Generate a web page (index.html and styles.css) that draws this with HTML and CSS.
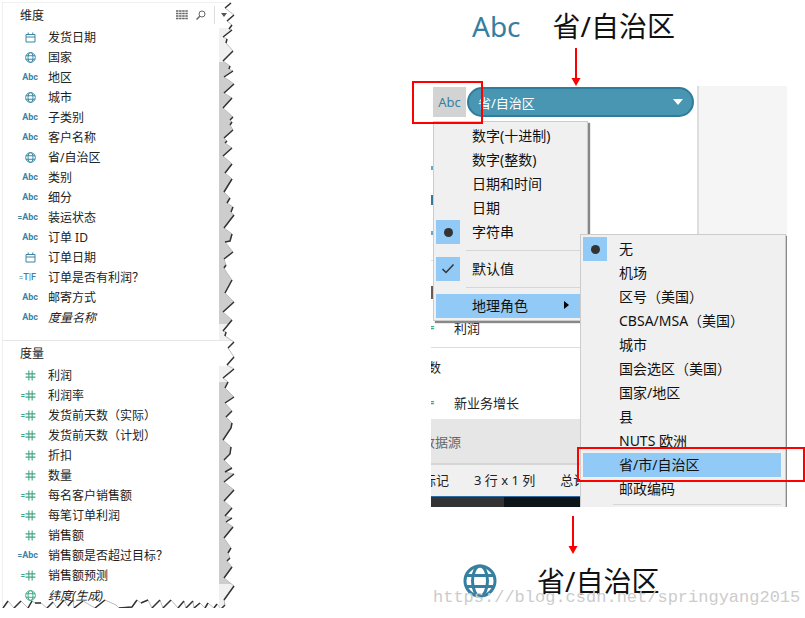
FILE: index.html
```
<!DOCTYPE html>
<html lang="zh-CN">

<head>
    <meta charset="UTF-8">
    <meta name="viewport" content="width=device-width, initial-scale=1.0">
    <title>地理角色</title>
    <link rel="stylesheet" href="styles.css">
</head>

<body>
    <!-- Shared icons -->
    <svg class="defs" aria-hidden="true">
        <symbol id="date" viewBox="0 0 11 11">
            <path d="M1 2.5h9v7.5H1zM1 5h9M3.2 .5v2M7.8 .5v2" fill="none" stroke="currentColor" />
        </symbol>
        <symbol id="globe" viewBox="0 0 34 34">
            <g fill="none" stroke="currentColor" stroke-width="3">
                <circle cx="17" cy="17" r="15" />
                <ellipse cx="17" cy="17" rx="7.500" ry="15" />
                <path d="M3 11.500h28M3 22.500h28" />
            </g>
        </symbol>
        <symbol id="number" viewBox="0 0 10 10">
            <path d="M3.500 .5v9M6.500 .5v9M.5 3.500h9M.5 6.500h9" fill="none" stroke="currentColor" />
        </symbol>
    </svg>

    <div id="app">
        <!-- Data pane -->
        <aside class="data-pane">
            <section class="group dimensions">
                <header class="group-head">
                    <h2>维度</h2>
                    <button class="tool" aria-label="视图">
                        <svg width="12" height="10" viewBox="0 0 12 10"><path d="M0 1h12M0 3.500h12M0 6h12M0 8.500h12" stroke="#666" stroke-width="1.300" stroke-dasharray="2.500 .6" /></svg>
                    </button>
                    <button class="tool" aria-label="搜索">
                        <svg width="10" height="10" viewBox="0 0 10 10" fill="none" stroke="#666"><circle cx="6" cy="4" r="3" /><path d="M3.800 6.200L.5 9.500" stroke-width="1.500" /></svg>
                    </button>
                    <button class="tool more" aria-label="更多">
                        <svg width="6" height="4" viewBox="0 0 6 4"><path d="M0 0h6L3 4z" fill="#555" /></svg>
                    </button>
                </header>
                <div class="group-body">
                    <ul class="fields">
                        <li><span class="type"><svg><use href="#date" /></svg></span>发货日期</li>
                        <li><span class="type"><svg><use href="#globe" /></svg></span>国家</li>
                        <li><span class="type">Abc</span>地区</li>
                        <li><span class="type"><svg><use href="#globe" /></svg></span>城市</li>
                        <li><span class="type">Abc</span>子类别</li>
                        <li><span class="type">Abc</span>客户名称</li>
                        <li><span class="type"><svg><use href="#globe" /></svg></span>省/自治区</li>
                        <li><span class="type">Abc</span>类别</li>
                        <li><span class="type">Abc</span>细分</li>
                        <li><span class="type"><i>=</i>Abc</span>装运状态</li>
                        <li><span class="type">Abc</span>订单 ID</li>
                        <li><span class="type"><svg><use href="#date" /></svg></span>订单日期</li>
                        <li><span class="type bool"><i>=</i>T|F</span>订单是否有利润？</li>
                        <li><span class="type">Abc</span>邮寄方式</li>
                        <li class="generated"><span class="type">Abc</span>度量名称</li>
                    </ul>
                    <div class="scrollbar"><div class="thumb"></div></div>
                </div>
            </section>

            <section class="group measures">
                <header class="group-head">
                    <h2>度量</h2>
                </header>
                <div class="group-body">
                    <ul class="fields">
                        <li><span class="type"><svg><use href="#number" /></svg></span>利润</li>
                        <li><span class="type"><i>=</i><svg><use href="#number" /></svg></span>利润率</li>
                        <li><span class="type"><i>=</i><svg><use href="#number" /></svg></span>发货前天数（实际）</li>
                        <li><span class="type"><i>=</i><svg><use href="#number" /></svg></span>发货前天数（计划）</li>
                        <li><span class="type"><svg><use href="#number" /></svg></span>折扣</li>
                        <li><span class="type"><svg><use href="#number" /></svg></span>数量</li>
                        <li><span class="type"><i>=</i><svg><use href="#number" /></svg></span>每名客户销售额</li>
                        <li><span class="type"><i>=</i><svg><use href="#number" /></svg></span>每笔订单利润</li>
                        <li><span class="type"><svg><use href="#number" /></svg></span>销售额</li>
                        <li><span class="type text"><i>=</i>Abc</span>销售额是否超过目标？</li>
                        <li><span class="type"><i>=</i><svg><use href="#number" /></svg></span>销售额预测</li>
                        <li class="generated"><span class="type"><svg><use href="#globe" /></svg></span>纬度(生成)</li>
                    </ul>
                    <div class="scrollbar"><div class="thumb"></div></div>
                </div>
            </section>

            <!-- Torn paper edge -->
            <svg class="torn" width="240" height="618" viewBox="0 0 240 618" fill="none" aria-hidden="true">
                <path fill="#fff" d="M231 3L225 8L234 15L227 21L232 25L229 29L232 30L223 37L227 39L226 43L233 51L223 61L230 66L229 69L233 71L224 77L234 84L224 93L232 98L223 108L233 117L230 120L232 122L230 125L233 130L224 138L227 141L225 143L232 148L223 156L232 164L225 173L232 179L224 192L230 198L227 203L233 207L231 212L234 215L224 228L232 234L230 241L225 242L233 252L224 259L226 265L224 268L227 273L232 280L225 293L234 302L223 312L232 320L223 331L226 332L225 336L234 342L228 348L234 357L227 365L234 369L223 378L228 382L225 388L234 397L225 403L232 411L226 417L232 423L231 428L223 440L231 447L230 454L224 460L232 468L225 472L234 474L224 482L234 490L224 501L232 508L225 516L232 518L226 522L233 527L224 538L231 548L228 553L230 558L227 561L232 567L224 578L234 586L224 600L225 605L221 609L217 604L214 608L208 603L205 608L200 603L194 608L193 601L186 608L184 601L178 608L171 600L163 608L160 600L152 608L148 600L141 603L137 600L132 607L119 608L116 605L105 600L95 608L83 601L74 608L73 600L68 606L64 600L57 608L53 602L47 608L41 603L35 603L32 601L28 608L21 601L14 608L8 601L3 608L0 608V618H240V0H231z" />
                <path stroke="#bbb" d="M231 3L225 8L234 15L227 21L232 25L229 29L232 30L223 37L227 39L226 43L233 51L223 61L230 66L229 69L233 71L224 77L234 84L224 93L232 98L223 108L233 117L230 120L232 122L230 125L233 130L224 138L227 141L225 143L232 148L223 156L232 164L225 173L232 179L224 192L230 198L227 203L233 207L231 212L234 215L224 228L232 234L230 241L225 242L233 252L224 259L226 265L224 268L227 273L232 280L225 293L234 302L223 312L232 320L223 331L226 332L225 336L234 342L228 348L234 357L227 365L234 369L223 378L228 382L225 388L234 397L225 403L232 411L226 417L232 423L231 428L223 440L231 447L230 454L224 460L232 468L225 472L234 474L224 482L234 490L224 501L232 508L225 516L232 518L226 522L233 527L224 538L231 548L228 553L230 558L227 561L232 567L224 578L234 586L224 600L225 605L221 609L217 604L214 608L208 603L205 608L200 603L194 608L193 601L186 608L184 601L178 608L171 600L163 608L160 600L152 608L148 600L141 603L137 600L132 607L119 608L116 605L105 600L95 608L83 601L74 608L73 600L68 606L64 600L57 608L53 602L47 608L41 603L35 603L32 601L28 608L21 601L14 608L8 601L3 608" />
                <path stroke="#333" stroke-width="1.500" d="M231 3L225 8M234 15L227 21M232 25L229 29M232 30L223 37M227 39L226 43M233 51L223 61M230 66L229 69M233 71L224 77M234 84L224 93M232 98L223 108M233 117L230 120M232 122L230 125M233 130L224 138M227 141L225 143M232 148L223 156M232 164L225 173M232 179L224 192M230 198L227 203M233 207L231 212M234 215L224 228M232 234L230 241L225 242M233 252L224 259M226 265L224 268M232 280L225 293M234 302L223 312M232 320L223 331M226 332L225 336M234 342L228 348M234 357L227 365M234 369L223 378M228 382L225 388M234 397L225 403M232 411L226 417M232 423L231 428L223 440M231 447L230 454L224 460M232 468L225 472M234 474L224 482M234 490L224 501M232 508L225 516M232 518L226 522M233 527L224 538M231 548L228 553M230 558L227 561M232 567L224 578M234 586L224 600M225 605L221 609M217 604L214 608M208 603L205 608M200 603L194 608M193 601L186 608M184 601L178 608M171 600L163 608M160 600L152 608M148 600L141 603M137 600L132 607L119 608M105 600L95 608M83 601L74 608M73 600L68 606M64 600L57 608M53 602L47 608M41 603L35 603M32 601L28 608M21 601L14 608M8 601L3 608" />
            </svg>
        </aside>

        <!-- Walkthrough -->
        <main class="guide">
            <div class="sample before">
                <span class="sample-icon">Abc</span>
                <span>省/自治区</span>
            </div>
            <svg class="arrow" width="10" height="38" viewBox="0 0 10 38"><path d="M4 0h2v30h3.500L5 38L.5 30H4z" fill="#f00" /></svg>

            <div class="shot">
                <div class="window">
                    <div class="workspace">
                        <div class="column">
                            <div class="pill-row">
                                <button class="type-button">Abc</button>
                                <button class="pill">省/自治区
                                    <svg width="10" height="6" viewBox="0 0 10 6"><path d="M0 0h10L5 6z" fill="#fff" /></svg>
                                </button>
                            </div>
                            <div class="stubs"><span></span><span class="tall"></span><span></span><span class="rule"></span><span class="dark"></span></div>
                            <div class="row"><i class="eq">=</i>利润</div>
                            <h3>参数</h3>
                            <div class="row"><i class="eq">=</i>新业务增长</div>
                        </div>
                        <div class="side"></div>
                    </div>
                    <div class="source-tab"><span>数据源</span></div>
                    <div class="status"><span class="cut">标记</span><span>3 行 x 1 列</span><span>总计</span></div>
                    <div class="taskbar"><div class="taskbar-start"></div></div>

                    <div class="menu type-menu" role="menu">
                        <button role="menuitem">数字(十进制)</button>
                        <button role="menuitem">数字(整数)</button>
                        <button role="menuitem">日期和时间</button>
                        <button role="menuitem">日期</button>
                        <button role="menuitem"><span class="mark"><span class="dot"></span></span>字符串</button>
                        <hr>
                        <button role="menuitem"><span class="mark"><svg width="14" height="12" viewBox="0 0 14 12"><path d="M1.500 6L5 9.500L12.500 1.500" fill="none" stroke="#333" stroke-width="1.500" /></svg></span>默认值</button>
                        <hr>
                        <button role="menuitem" class="active">地理角色<svg class="sub" width="5" height="8" viewBox="0 0 5 8"><path d="M0 0l5 4l-5 4z" fill="#000" /></svg></button>
                    </div>

                    <div class="menu role-menu" role="menu">
                        <button role="menuitem"><span class="mark"><span class="dot"></span></span>无</button>
                        <button role="menuitem">机场</button>
                        <button role="menuitem">区号（美国）</button>
                        <button role="menuitem">CBSA/MSA（美国）</button>
                        <button role="menuitem">城市</button>
                        <button role="menuitem">国会选区（美国）</button>
                        <button role="menuitem">国家/地区</button>
                        <button role="menuitem">县</button>
                        <button role="menuitem">NUTS 欧洲</button>
                        <button role="menuitem" class="active">省/市/自治区</button>
                        <button role="menuitem">邮政编码</button>
                        <hr>
                    </div>
                </div>
                <div class="highlight type-highlight"></div>
                <div class="highlight role-highlight"></div>
            </div>

            <svg class="arrow second" width="10" height="38" viewBox="0 0 10 38"><path d="M4 0h2v30h3.500L5 38L.5 30H4z" fill="#f00" /></svg>
            <div class="sample after">
                <svg class="sample-icon" width="34" height="34"><use href="#globe" /></svg>
                <span>省/自治区</span>
            </div>
            <p class="watermark">https://blog.csdn.net/springyang2015</p>
        </main>
    </div>
</body>

</html>
```
FILE: styles.css
```
/* Global reset */
* {
    box-sizing: border-box;
    margin: 0;
    padding: 0;
}

body {
    background: #fff;
    color: #222;
    font-family: "Noto Sans", "Noto Sans CJK SC", sans-serif;
    font-size: 12px;
}

button {
    border: none;
    background: none;
    color: inherit;
    font: inherit;
    cursor: pointer;
}

ul {
    list-style: none;
}

i {
    font-style: normal;
}

.defs {
    position: absolute;
    width: 0;
    height: 0;
}

#app {
    display: flex;
    align-items: flex-start;
}

/* Data pane */
.data-pane {
    position: relative;
    flex: 0 0 240px;
    padding: 2px 4px 0 2px;
}

.group {
    border-left: 1px solid #eee;
}

.dimensions {
    border-top: 1px solid #f0f0f0;
    border-bottom: 1px solid #e6e6e6;
}

.group-head {
    display: flex;
    align-items: center;
    gap: 8px;
    height: 25px;
    padding: 0 9px 2px 17px;
}

.group-head h2 {
    flex: 1;
    font-size: 12px;
    font-weight: 400;
}

.tool {
    display: flex;
}

.tool.more {
    align-items: center;
    height: 18px;
    padding-left: 6px;
    border-left: 1px solid #ddd;
}

.group-body {
    display: flex;
}

.fields {
    flex: 1;
}

.dimensions .fields {
    padding-bottom: 12px;
}

.fields li {
    display: flex;
    align-items: center;
    height: 20px;
    padding: 0 0 2px 15px;
    white-space: nowrap;
}

.type {
    display: flex;
    align-items: center;
    justify-content: flex-end;
    width: 20px;
    margin-right: 10px;
    color: #3a84a3;
    font: bold 9px Roboto, sans-serif;
}

.type i {
    font-size: 8px;
}

.type svg {
    width: 11px;
    height: 11px;
    margin-right: 2px;
}

.type.bool {
    padding-right: 2px;
    font-weight: 500;
}

.measures .type {
    color: #44a581;
}

.measures .type.text {
    color: #3a84a3;
}

.generated {
    font-style: italic;
}

.scrollbar {
    width: 17px;
    background: #f0f0f0;
}

.thumb {
    height: 262px;
    margin-top: 34px;
    background: #cdcdcd;
}

.measures .thumb {
    height: 202px;
    margin-top: 16px;
}

.torn {
    position: absolute;
    top: 0;
    left: 0;
}

/* Walkthrough */
.guide {
    position: relative;
    flex: 1;
    padding-left: 191px;
}

.sample {
    display: flex;
    align-items: center;
    color: #111;
    font-size: 28px;
    line-height: 40px;
}

.sample-icon {
    color: #3580a0;
}

.before {
    gap: 32px;
    height: 48px;
    padding: 4px 0 0 41px;
}

.after {
    gap: 40px;
    height: 54px;
    padding-left: 32px;
}

.arrow {
    display: block;
    margin-left: 140px;
}

.arrow.second {
    margin: 9px 0 0 137px;
}

.shot {
    position: relative;
    width: 356px;
}

.window {
    position: relative;
    overflow: hidden;
    font-size: 13px;
}

.workspace {
    display: flex;
}

.column {
    flex: 3;
    padding-bottom: 6px;
    border-right: 2px solid #ddd;
}

.side {
    flex: 1;
    background: #f5f5f5;
}

.pill-row {
    display: flex;
    padding: 1px 3px 0 2px;
}

.type-button {
    width: 33px;
    height: 30px;
    background: #d3d3d3;
    color: #3580a0;
}

.pill {
    display: flex;
    flex: 1;
    align-items: center;
    justify-content: space-between;
    margin-left: 1px;
    padding: 0 9px;
    border: 2px solid #2f7d9b;
    border-radius: 15px;
    background: #4996b2;
    color: #fff;
}

.stubs {
    display: flex;
    flex-direction: column;
    justify-content: space-between;
    height: 198px;
    padding: 49px 0 16px;
}

.stubs span {
    width: 3px;
    height: 4px;
    background: #69a9c2;
}

.stubs .tall {
    height: 10px;
    background: #3a7796;
}

.stubs .rule {
    width: 100%;
    height: 1px;
    background: #ddd;
}

.stubs .dark {
    height: 13px;
    background: #665c55;
}

.row {
    display: flex;
    align-items: center;
    height: 24px;
}

.eq {
    width: 23px;
    margin-left: -4px;
    margin-right: 4px;
    color: #44a581;
    font-weight: 700;
}

.column h3 {
    height: 44px;
    margin-top: 8px;
    margin-left: -16px;
    padding-top: 7px;
    border-top: 1px solid #ddd;
    font-size: 13px;
    font-weight: 400;
    line-height: 24px;
}

/* the list below the heading sits close to it */
.column h3 + .row {
    height: 22px;
}

.source-tab {
    height: 46px;
    border-bottom: 2px solid #d5d5d5;
    background: #e6e6e6;
    color: #666;
    line-height: 46px;
}

.source-tab span {
    margin-left: -9px;
}

.status {
    display: flex;
    gap: 25px;
    height: 32px;
    border-bottom: 1px solid #2d6da3;
    background: #f0f0f0;
    line-height: 30px;
}

.status .cut {
    margin-left: -8px;
}

.taskbar {
    height: 10px;
    background: #0d1518;
}

.taskbar-start {
    width: 73px;
    height: 100%;
    background: #333;
}

/* Context menus */
.menu {
    position: absolute;
    padding: 2px;
    border: 1px solid #ccc;
    background: #f0f0f0;
    box-shadow: 2px 2px 1px #888;
    color: #111;
    font-size: 14px;
}

.menu button {
    display: flex;
    position: relative;
    align-items: center;
    width: 100%;
    height: 24px;
    padding: 0 0 2px 36px;
    white-space: nowrap;
}

.menu .active {
    background: #91c9f7;
}

.menu hr {
    height: 1px;
    margin: 6px 0 6px 30px;
    border: none;
    background: #d7d7d7;
}

.mark {
    display: flex;
    position: absolute;
    top: 0;
    left: 0;
    align-items: center;
    justify-content: center;
    width: 24px;
    height: 24px;
    background: #91c9f7;
}

.dot {
    width: 9px;
    height: 9px;
    border-radius: 50%;
    background: #333;
}

.sub {
    margin-left: auto;
    margin-right: 16px;
}

.type-menu {
    top: 35px;
    left: 2px;
    width: 155px;
}

.role-menu {
    top: 148px;
    left: 149px;
    width: 206px;
    padding-right: 4px;
}

.role-menu hr {
    margin: 3px 0 6px 30px;
}

.highlight {
    position: absolute;
    border: 2px solid #f00;
}

.type-highlight {
    top: -5px;
    left: -19px;
    width: 71px;
    height: 43px;
}

.role-highlight {
    top: 361px;
    left: 146px;
    width: 228px;
    height: 35px;
}

.watermark {
    position: absolute;
    bottom: 0;
    left: 193px;
    color: #ccc;
    font: 17px/20px "Liberation Mono", monospace;
}
```
